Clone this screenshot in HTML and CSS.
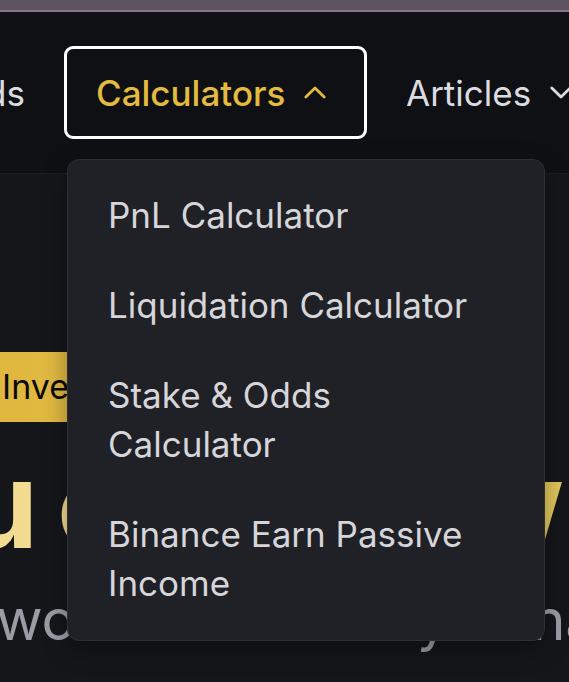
FILE: index.html
```html
<!DOCTYPE html>
<html lang="en">
<head>
<meta charset="utf-8">
<title>Calculators menu</title>
<link rel="stylesheet" href="styles.css">
</head>
<body>
<div class="topbar"></div>
<header class="header">
  <nav class="nav">
    <div class="nav-clip"><span class="nav-link">Rewards</span></div>
    <div class="nav-item">
      <button class="nav-btn active">
        <span>Calculators</span>
        <svg class="chev" viewBox="0 0 24 14" width="24" height="14"><path d="M2 12 L12 2 L22 12" /></svg>
      </button>
      <div class="dropdown">
        <a class="dd-item">PnL Calculator</a>
        <a class="dd-item">Liquidation Calculator</a>
        <a class="dd-item">Stake &amp; Odds<br>Calculator</a>
        <a class="dd-item">Binance Earn Passive<br>Income</a>
      </div>
    </div>
    <button class="nav-btn plain">
      <span>Articles</span>
      <svg class="chev" viewBox="0 0 24 14" width="24" height="14"><path d="M2 2 L12 12 L22 2" /></svg>
    </button>
  </nav>
</header>
<main class="hero">
  <div class="badge">Investment Tools</div>
  <h1 class="title">You can grow</h1>
  <p class="subtitle">world of fun as you navigate markets</p>
</main>
</body>
</html>
```
FILE: styles.css
```css
* { box-sizing: border-box; }
html, body { margin: 0; padding: 0; }
body {
  width: 569px;
  height: 682px;
  overflow: hidden;
  background: #15161a;
  font-family: Inter, "Noto Sans", sans-serif;
}
.topbar {
  height: 12px;
  background: #5e5460;
  border-bottom: 2px solid #857a87;
}
.header {
  height: 162px;
  background: #0f1014;
  border-bottom: 1px solid #1d1e23;
  display: flex;
  align-items: center;
}
.nav {
  display: flex;
  align-items: center;
  gap: 39px;
  white-space: nowrap;
}
.nav-clip {
  width: 25px;
  overflow: hidden;
  display: flex;
  justify-content: flex-end;
}
.nav-link, .nav-btn {
  font-size: 35px;
  color: #dcdce0;
  font-family: inherit;
}
.nav-item { position: relative; }
.nav-btn {
  display: flex;
  align-items: center;
  gap: 19px;
  background: none;
  border: 3px solid transparent;
  padding: 0;
  font-weight: 500;
}
.nav-btn.active {
  width: 303px;
  height: 93px;
  border-color: #ffffff;
  border-radius: 9px;
  padding-left: 29px;
  color: #e2bb3f;
}
.nav-btn.plain { border: none; font-weight: 400; }
.chev {
  width: 22px;
  height: 13px;
  fill: none;
  stroke: currentColor;
  stroke-width: 3;
  stroke-linecap: round;
  stroke-linejoin: round;
}
.dropdown {
  position: absolute;
  left: 3px;
  top: 113px;
  width: 478px;
  padding: 11px 0;
  background: #202126;
  border: 1px solid #2e2f34;
  border-radius: 12px;
  box-shadow: 0 8px 24px rgba(0,0,0,0.35);
  z-index: 5;
  display: flex;
  flex-direction: column;
}
.dd-item {
  display: block;
  padding: 20px 20px 21px 40px;
  font-size: 35px;
  line-height: 49px;
  color: #d6d6da;
}
.hero {
  overflow: hidden;
  padding-top: 178px;
}
.badge {
  display: inline-block;
  margin-left: -20px;
  padding: 0 24px 0 22px;
  height: 70px;
  line-height: 70px;
  font-size: 34px;
  color: #0b0b0b;
  background: linear-gradient(90deg, #dfb63d, #e8c552);
}
.title {
  margin: 18px 0 0 -175px;
  font-size: 120px;
  line-height: 130px;
  font-weight: 700;
  letter-spacing: -0.04em;
  white-space: nowrap;
  background: linear-gradient(90deg, #f3e1a0 0%, #f0d98a 40%, #e2c557 100%);
  -webkit-background-clip: text;
  background-clip: text;
  color: transparent;
}
.subtitle {
  margin: 10px 0 0 -4px;
  font-size: 57px;
  line-height: 80px;
  color: #9c9ca5;
  white-space: nowrap;
}
```
